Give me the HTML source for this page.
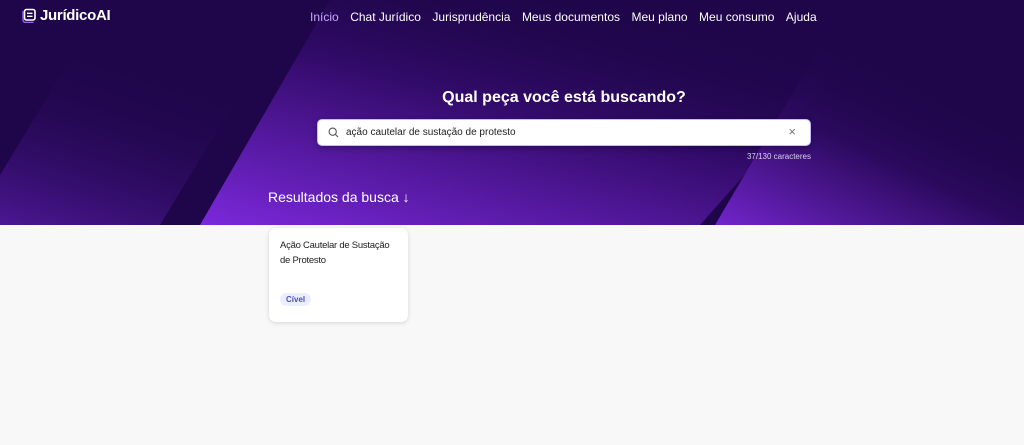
<!DOCTYPE html><html><head><meta charset="utf-8"><style>
*{margin:0;padding:0;box-sizing:border-box}
body{width:1024px;height:445px;background:#f8f8f8;font-family:"Liberation Sans",sans-serif;position:relative;overflow:hidden}
.hero{position:absolute;left:0;top:0;width:1024px;height:225px;background:#1f064a;overflow:hidden}
.hero svg.bg{position:absolute;left:0;top:0}
.nav{position:absolute;top:10px;font-size:12px;color:#fff;display:flex;gap:11.5px;left:310px}
.nav span:first-child{color:#c8a8ff}
.logo{position:absolute;left:22px;top:7px;color:#fff;font-weight:bold;font-size:15px;display:flex;align-items:center;gap:3px;letter-spacing:-.3px}
.logo svg{flex:none}
h1{position:absolute;left:0;width:1128px;text-align:center;top:89px;color:#fff;font-size:16px;font-weight:bold}
.search{position:absolute;left:317px;top:119px;width:494px;height:27px;background:#fff;border-radius:5px;border:1px solid #c9b8ff;box-shadow:0 2px 6px rgba(0,0,0,.3);font-size:10px;color:#222;padding:7px 0 0 28px}
.cnt{position:absolute;left:700px;width:111px;text-align:right;top:152px;font-size:8px;color:#d8d0ea}
.res{position:absolute;left:268px;top:189px;color:#fff;font-size:14px}
.card{position:absolute;left:269px;top:228px;width:139px;height:94px;background:#fff;border-radius:7px;box-shadow:0 1px 4px rgba(0,0,0,.15);padding:10px 10px 10px 11px}
.card p{font-size:9.5px;line-height:15px;color:#222;letter-spacing:-.25px}
.tag{position:absolute;left:11px;top:65px;background:#eaeeff;color:#4b4fc0;font-size:8px;font-weight:bold;padding:2px 6px;border-radius:8px}
</style></head><body>
<div class="hero">
<svg class="bg" width="1024" height="225"><defs>
<linearGradient id="g1" x1="0" y1="1" x2="0.5" y2="0"><stop offset="0" stop-color="#6a22c4"/><stop offset="1" stop-color="#1f064a" stop-opacity="0"/></linearGradient>
<linearGradient id="g2" x1="0" y1="1" x2="0.7" y2="0.1"><stop offset="0" stop-color="#7b28da"/><stop offset=".6" stop-color="#320b6a"/><stop offset="1" stop-color="#1f064a" stop-opacity="0"/></linearGradient>
<linearGradient id="g3" x1="0" y1="1" x2="0.6" y2="0.2"><stop offset="0" stop-color="#7b28da"/><stop offset=".6" stop-color="#2c0a60"/><stop offset="1" stop-color="#1f064a" stop-opacity="0"/></linearGradient>
</defs>
<polygon points="0,175 70,60 260,60 160,225 0,225" fill="url(#g1)" opacity=".6"/>
<polygon points="200,225 330,0 900,0 700,225" fill="url(#g2)"/>
<polygon points="715,225 830,30 1024,30 1024,225" fill="url(#g3)" opacity=".9"/>
</svg>
<div class="logo"><svg width="15" height="15" viewBox="0 0 15 15"><rect x="2.5" y="1.5" width="10.5" height="10.5" rx="2" fill="none" stroke="#fff" stroke-width="1.6"/><path d="M5 5.3h5.5M5 8.3h5.5" stroke="#fff" stroke-width="1.4"/><path d="M1 3v9a2.5 2.5 0 0 0 2.5 2.5h8" stroke="#a060ff" stroke-width="1.4" fill="none"/></svg>JurídicoAI</div>
<div class="nav"><span>Início</span><span>Chat Jurídico</span><span>Jurisprudência</span><span>Meus documentos</span><span>Meu plano</span><span>Meu consumo</span><span>Ajuda</span></div>
<h1>Qual peça você está buscando?</h1>
<div class="search"><svg style="position:absolute;left:10px;top:7px" width="11" height="11" viewBox="0 0 11 11"><circle cx="4.7" cy="4.7" r="3.6" fill="none" stroke="#555" stroke-width="1.1"/><path d="M7.4 7.4l2.6 2.6" stroke="#555" stroke-width="1.1"/></svg>ação cautelar de sustação de protesto<span style="position:absolute;right:14px;top:4px;color:#777;font-size:13px">×</span></div>
<div class="cnt">37/130 caracteres</div>
<div class="res">Resultados da busca ↓</div>
</div>
<div class="card"><p>Ação Cautelar de Sustação de Protesto</p><span class="tag">Cível</span></div>
</body></html>
